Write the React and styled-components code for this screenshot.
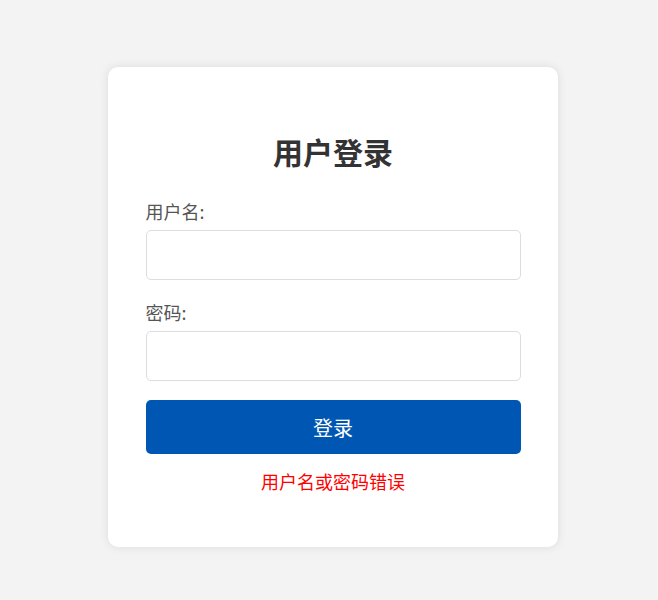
import React, { useState } from 'react';
import styled, { createGlobalStyle } from 'styled-components';

const GlobalStyle = createGlobalStyle`
    * { box-sizing: border-box; }
    body {
        margin: 0;
        background: #f3f3f3;
        font-family: "Noto Sans CJK SC", "Noto Sans", sans-serif;
    }
`;

export default function App() {
    const [username, setUsername] = useState('');
    const [password, setPassword] = useState('');

    return (
        <>
            <GlobalStyle />
            <Page>
                <Card>
                    <Title>用户登录</Title>
                    <Field>
                        <Label htmlFor="username">用户名:</Label>
                        <Input id="username" value={username} onChange={e => setUsername(e.target.value)} />
                    </Field>
                    <Field>
                        <Label htmlFor="password">密码:</Label>
                        <Input id="password" type="password" value={password} onChange={e => setPassword(e.target.value)} />
                    </Field>
                    <Button type="button">登录</Button>
                    <Error>用户名或密码错误</Error>
                </Card>
            </Page>
        </>
    )
};

const Page = styled.div`
    display: flex;
    align-items: center;
    justify-content: center;
    min-height: 100vh;
    padding: 14px 0 0 8px;
`;

const Card = styled.div`
    display: flex;
    flex-direction: column;
    width: 450px;
    height: 480px;
    padding: 40px 37.5px 0;
    background: #fff;
    border-radius: 10px;
    box-shadow: 0 0 10px rgba(0, 0, 0, 0.1);
`;

const Title = styled.h2`
    margin: 27px 0 31px;
    font-size: 30px;
    line-height: 34px;
    font-weight: 700;
    color: #333;
    text-align: center;
`;

const Field = styled.div`
    display: flex;
    flex-direction: column;
    margin-bottom: 20px;

    &:last-of-type {
        margin-bottom: 19px;
    }
`;

const Label = styled.label`
    font-size: 18px;
    line-height: 24px;
    color: #555;
    margin-bottom: 7px;
`;

const Input = styled.input`
    height: 50px;
    width: 100%;
    padding: 0 12px;
    border: 1px solid #ddd;
    border-radius: 5px;
    font-size: 16px;
    outline: none;
`;

const Button = styled.button`
    height: 54px;
    width: 100%;
    border: none;
    border-radius: 5px;
    background: #0056b3;
    color: #fff;
    font-family: inherit;
    font-size: 20px;
    cursor: pointer;
`;

const Error = styled.p`
    margin: 15px 0 0;
    font-size: 18px;
    line-height: 24px;
    color: red;
    text-align: center;
`;
